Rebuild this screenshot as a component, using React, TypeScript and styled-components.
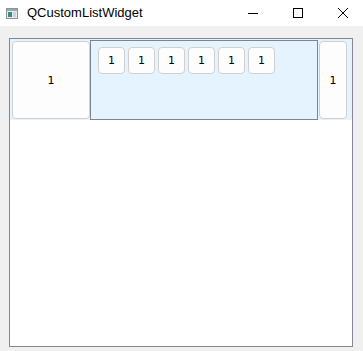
import React from 'react';
import styled, { createGlobalStyle } from 'styled-components';

const GlobalStyle = createGlobalStyle`
  html, body {
    margin: 0;
    padding: 0;
    background: #f0f0f0;
  }
`;

const Window = styled.div`
  width: 363px;
  height: 351px;
  display: flex;
  flex-direction: column;
  background: #f0f0f0;
  font-family: "Liberation Sans", Arial, sans-serif;
  overflow: hidden;
`;

const TitleBar = styled.div`
  height: 26px;
  flex-shrink: 0;
  background: #ffffff;
  display: flex;
  align-items: center;
`;

const AppIcon = styled.svg`
  margin-left: 6px;
  margin-right: 9px;
  flex-shrink: 0;
`;

const Title = styled.span`
  font-size: 13px;
  color: #000000;
  flex: 1;
  margin-top: -1px;
`;

const Controls = styled.div`
  display: flex;
  height: 100%;
  margin-right: -2px;
`;

const ControlButton = styled.div`
  width: 45px;
  height: 100%;
  display: flex;
  align-items: center;
  justify-content: center;
`;

const Content = styled.div`
  flex: 1;
  display: flex;
  padding: 12px 10px 4px 9px;
`;

const ListBox = styled.div`
  flex: 1;
  border: 1px solid #828790;
  background: #ffffff;
  display: flex;
  flex-direction: column;
`;

const Row = styled.div`
  height: 81px;
  background: #e5f3ff;
  display: flex;
  align-items: flex-start;
  padding: 1px 0 0 2px;
  box-sizing: border-box;
`;

const ItemButton = styled.div<{ $width: number }>`
  width: ${(p) => p.$width}px;
  height: 78px;
  margin-top: 1px;
  box-sizing: border-box;
  background: #fdfdfd;
  border: 1px solid #d0d0d0;
  border-radius: 4px;
  display: flex;
  align-items: center;
  justify-content: center;
  font-family: "DejaVu Sans", sans-serif;
  font-size: 11px;
  color: #000000;
`;

const SideItem = styled(ItemButton)`
  margin-left: 1px;
`;

const SelectedItem = styled.div`
  width: 228px;
  height: 80px;
  box-sizing: border-box;
  border: 1px solid #7c858f;
  background: #e5f3ff;
  display: flex;
  align-items: flex-start;
  gap: 3px;
  padding: 6px 0 0 7px;
`;

const SmallButton = styled.div`
  width: 27px;
  height: 27px;
  box-sizing: border-box;
  background: #fdfdfd;
  border: 1px solid #d0d0d0;
  border-radius: 4px;
  display: flex;
  align-items: center;
  justify-content: center;
  font-family: "DejaVu Sans", sans-serif;
  font-size: 11px;
  color: #000000;
`;

export default function App() {
  const inner = [1, 1, 1, 1, 1, 1];
  return (
    <>
      <GlobalStyle />
      <Window>
        <TitleBar>
          <AppIcon width="12" height="11" viewBox="0 0 12 11">
            <rect x="0.5" y="0.5" width="11" height="10" fill="#e8ecef" stroke="#8a949c" />
            <rect x="1" y="1" width="10" height="2" fill="#9aa7b0" />
            <rect x="2" y="4" width="4" height="5" fill="#3b8c7a" />
            <rect x="7" y="4" width="3" height="5" fill="#c9d4da" />
          </AppIcon>
          <Title>QCustomListWidget</Title>
          <Controls>
            <ControlButton>
              <svg width="10" height="10" viewBox="0 0 10 10">
                <line x1="0" y1="5.5" x2="10" y2="5.5" stroke="#000" strokeWidth="1" />
              </svg>
            </ControlButton>
            <ControlButton>
              <svg width="10" height="10" viewBox="0 0 10 10">
                <rect x="0.5" y="0.5" width="9" height="9" fill="none" stroke="#000" strokeWidth="1" />
              </svg>
            </ControlButton>
            <ControlButton>
              <svg width="10" height="10" viewBox="0 0 10 10">
                <path d="M0 0 L10 10 M10 0 L0 10" stroke="#000" strokeWidth="1" />
              </svg>
            </ControlButton>
          </Controls>
        </TitleBar>
        <Content>
          <ListBox>
            <Row>
              <ItemButton $width={78}>1</ItemButton>
              <SelectedItem>
                {inner.map((n, i) => (
                  <SmallButton key={i}>{n}</SmallButton>
                ))}
              </SelectedItem>
              <SideItem $width={28}>1</SideItem>
            </Row>
          </ListBox>
        </Content>
      </Window>
    </>
  );
}
